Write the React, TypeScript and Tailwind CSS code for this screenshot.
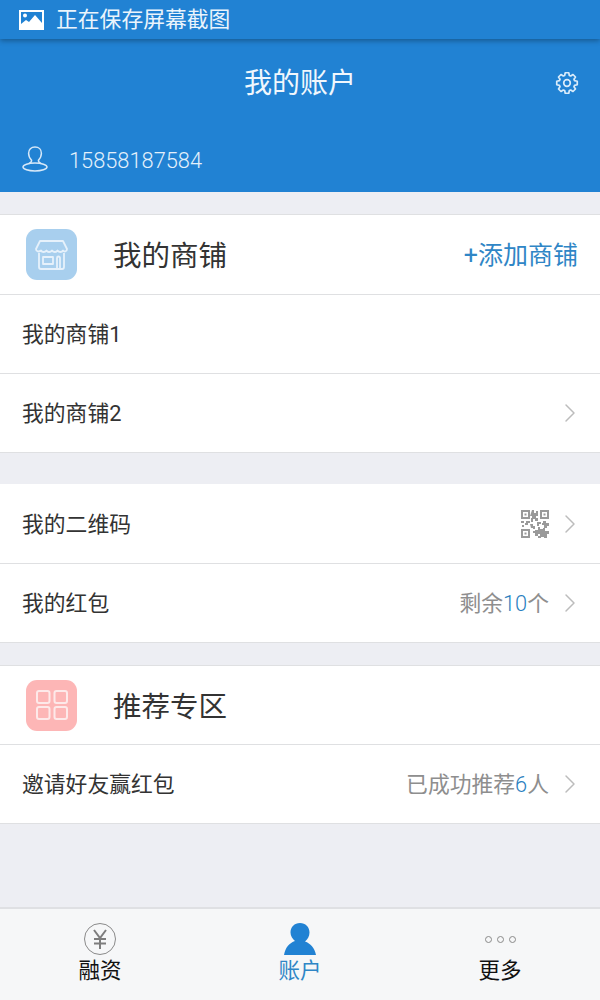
import React from 'react';
import { ChevronRight } from 'lucide-react';

const FONT = "font-['Roboto','Noto_Sans_CJK_SC',sans-serif]";

// eight rounded teeth, worked out once from polar points
const gearPath = (() => {
  const pts: string[] = [];
  for (let i = 0; i < 8; i++) {
    const a = (i * Math.PI) / 4 - Math.PI / 2;
    const at = (r: number, d: number) => `${(12 + r * Math.cos(a + d)).toFixed(2)} ${(12 + r * Math.sin(a + d)).toFixed(2)}`;
    pts.push(`${i === 0 ? 'M' : 'L'}${at(7.9, -0.3)}`, `L${at(10.4, -0.17)}`, `L${at(10.4, 0.17)}`, `L${at(7.9, 0.3)}`);
  }
  return pts.join(' ') + 'Z';
})();

const Arrow = () => <ChevronRight size={32} strokeWidth={1.1} className="text-[#bcbcbc] mr-[-9px] ml-[5px]" />;

const StatusImageIcon = () => (
  <svg width="25" height="20" viewBox="0 0 25 20">
    <path fillRule="evenodd" fill="#fff" d="M0 0h25v20H0zM2 2v12l5-4 3 2 6-7 7 8V2zM6 3.500a2 2 0 1 1 0 4 2 2 0 0 1 0-4z" />
  </svg>
);

const UserOutline = () => (
  <svg width="26" height="26" viewBox="0 0 26 26" fill="none" stroke="#d6e8f8" strokeWidth="1.5">
    <path d="M13 1c3.900 0 6.400 2.500 6.400 6.200 0 3-1.400 5.400-3 7 0 1.700 1 2.700 2.600 3.300M13 1C9.100 1 6.600 3.500 6.600 7.200c0 3 1.400 5.400 3 7 0 1.700-1 2.700-2.600 3.300" />
    <ellipse cx="13" cy="21" rx="12" ry="4" />
  </svg>
);

const Gear = () => (
  <svg width="24" height="24" viewBox="0 0 24 24" fill="none" stroke="#d9ebfa" strokeWidth="1.7" strokeLinejoin="round">
    <path d={gearPath} />
    <circle cx="12" cy="12" r="3.300" />
  </svg>
);

const ShopIcon = () => (
  <div className="w-[51px] h-[51px] rounded-[11px] bg-[#a8cfee] flex items-center justify-center">
    <svg width="33" height="30" viewBox="0 0 33 30" fill="none" stroke="#e6f1fb" strokeWidth="1.8" strokeLinejoin="round">
      <path d="M5 1h23l4 8c0 3-3 3-4 1.500-1 2-4 2-5.500 0-1 2-4 2-5.500 0-1.500 2-4.500 2-5.500 0-1.500 2-4.500 2-5.500 0C4 12 1 12 1 9z" />
      <path d="M4 13v14a2 2 0 0 0 2 2h21a2 2 0 0 0 2-2V13" />
      <path d="M8 17h10v7H8zM22 29V18a1.500 1.500 0 0 1 3 0v11" />
    </svg>
  </div>
);

const GridIcon = () => (
  <div className="w-[51px] h-[51px] rounded-[11px] bg-[#fdb6b6] flex items-center justify-center">
    <svg width="32" height="30" viewBox="0 0 32 30" fill="none" stroke="#fde9e9" strokeWidth="2">
      <rect x="1" y="1" width="12.500" height="12" rx="2" />
      <rect x="18.500" y="1" width="12.500" height="12" rx="2" />
      <rect x="1" y="17" width="12.500" height="12" rx="2" />
      <rect x="18.500" y="17" width="12.500" height="12" rx="2" />
    </svg>
  </div>
);

const QrIcon = () => (
  <svg width="28" height="28" viewBox="0 0 28 28" fill="#9a9a9a">
    <path fillRule="evenodd" d="M0 0h9v9H0zM2 2v5h5V2zM19 0h9v9h-9zM21 2v5h5V2zM0 19h9v9H0zM2 21v5h5v-5z" />
    <rect x="3.500" y="3.500" width="2" height="2" />
    <rect x="22.500" y="3.500" width="2" height="2" />
    <rect x="3.500" y="22.500" width="2" height="2" />
    <path d="M11 0h2v3h2V1h2v5h-2v2h2v3h-3V9h-2v3h-2V8h1V6h-2zM0 11h3v2H0zM5 11h4v2H7v2H4v-2h1zM1 15h2v2H1zM9 14h3v2h2v3h-2v-1h-2zM16 12h4v2h-2v2h-2zM22 11h3v2h3v3h-2v2h-3v-3h-2v-2h1zM14 20h3v-3h2v2h3v-1h2v3h4v3h-2v5h-3v-2h-3v2h-3v-3h2v-2h-2v2h-3v-3h-2v-2h2z" />
  </svg>
);

const Row = ({ label, h, children, last }: { label: string; h: string; children?: React.ReactNode; last?: boolean }) => (
  <div className={`${h} flex items-center justify-between pl-[22px] pr-[23px] bg-white ${last ? '' : 'border-b border-[#dfe0e2]'}`}>
    <span className="pt-[3px] text-[21.800px] text-[#333]">{label}</span>
    <div className="flex items-center text-[21.800px] text-[#8e8e8e]">{children}</div>
  </div>
);

const SectionHead = ({ icon, h, title, children }: { icon: React.ReactNode; h: string; title: string; children?: React.ReactNode }) => (
  <div className={`${h} flex items-center pl-[26px] pr-[22px] bg-white border-b border-[#dfe0e2]`}>
    {icon}
    <span className="ml-[36px] pt-[6px] text-[28.500px] text-[#333]">{title}</span>
    <div className="ml-auto">{children}</div>
  </div>
);

export default function App() {
  return (
    <div className={`${FONT} w-[600px] h-[1000px] flex flex-col bg-[#edeef3] overflow-hidden`}>
      <div className="bg-[#2182d3]">
        {/* system status bar */}
        <div className="h-[39px] flex items-center pl-[19px] shadow-[0_2px_5px_rgba(0,0,0,0.3)]">
          <StatusImageIcon />
          <span className="ml-[12px] pt-[2px] text-[21.800px] text-[#eaf4fc]">正在保存屏幕截图</span>
        </div>
        <div className="relative h-[85px] flex items-center justify-center">
          <span className="pt-[5px] text-[28px] text-[#f0f7fd]">我的账户</span>
          <div className="absolute right-[21px] top-[32px]">
            <Gear />
          </div>
        </div>
        <div className="h-[68px] flex items-center pl-[22px] pt-[5px]">
          <div className="mt-[-3px]">
            <UserOutline />
          </div>
          <span className="ml-[21px] pt-[2px] text-[21.800px] font-light text-[#e3f0fb]">15858187584</span>
        </div>
      </div>

      <div className="mt-[22px] border-t border-b border-[#dfe0e2]">
        <SectionHead icon={<ShopIcon />} h="h-[80px]" title="我的商铺">
          <span className="inline-block pt-[3px] text-[25px] text-[#2f86c6]">+添加商铺</span>
        </SectionHead>
        <Row label="我的商铺1" h="h-[79px]" />
        <Row label="我的商铺2" h="h-[78px]" last>
          <Arrow />
        </Row>
      </div>

      <div className="mt-[31px] border-b border-[#dfe0e2]">
        <Row label="我的二维码" h="h-[80px]">
          <QrIcon />
          <Arrow />
        </Row>
        <Row label="我的红包" h="h-[78px]" last>
          <span className="pt-[2px]">剩余<span className="text-[#2a80c0] font-light">10</span>个</span>
          <Arrow />
        </Row>
      </div>

      <div className="mt-[22px] border-t border-b border-[#dfe0e2]">
        <SectionHead icon={<GridIcon />} h="h-[79px]" title="推荐专区" />
        <Row label="邀请好友赢红包" h="h-[78px]" last>
          <span className="pt-[2px]">已成功推荐<span className="text-[#2a80c0] font-light">6</span>人</span>
          <Arrow />
        </Row>
      </div>

      {/* tab bar */}
      <div className="mt-auto h-[93px] grid grid-cols-3 bg-[#f6f7f8] border-t-2 border-[#dfe0e3]">
        <div className="flex flex-col items-center pt-[14px]">
          <div className="w-[32px] h-[32px] rounded-full border-[1.5px] border-[#8a8a8a] flex items-center justify-center">
            <svg width="18" height="20" viewBox="0 0 18 20" fill="none" stroke="#7d7d7d" strokeWidth="2">
              <path d="M3 1l6 8 6-8M9 9v11M3 10h12M3 14.500h12" />
            </svg>
          </div>
          <span className="mt-[1px] text-[21.500px] leading-[29px] text-[#111]">融资</span>
        </div>
        <div className="flex flex-col items-center pt-[14px]">
          <svg width="32" height="32" viewBox="0 0 32 32" fill="#2182d3">
            <path d="M16 0c5.500 0 9.500 4 9.500 9.500 0 4-2 7-4.500 9 5.500 2 9.500 6 11 13.500H0C1.500 24 5.500 20 11 18c-2.500-2-4.500-5-4.500-8.500C6.500 4 10.500 0 16 0z" />
          </svg>
          <span className="mt-[1px] text-[21.500px] leading-[29px] text-[#2f86c6]">账户</span>
        </div>
        <div className="flex flex-col items-center pt-[14px]">
          <div className="h-[32px] flex items-center gap-[5px]">
            <span className="w-[7px] h-[7px] rounded-full border border-[#8a8a8a]" />
            <span className="w-[7px] h-[7px] rounded-full border border-[#8a8a8a]" />
            <span className="w-[7px] h-[7px] rounded-full border border-[#8a8a8a]" />
          </div>
          <span className="mt-[1px] text-[21.500px] leading-[29px] text-[#111]">更多</span>
        </div>
      </div>
    </div>
  );
}
